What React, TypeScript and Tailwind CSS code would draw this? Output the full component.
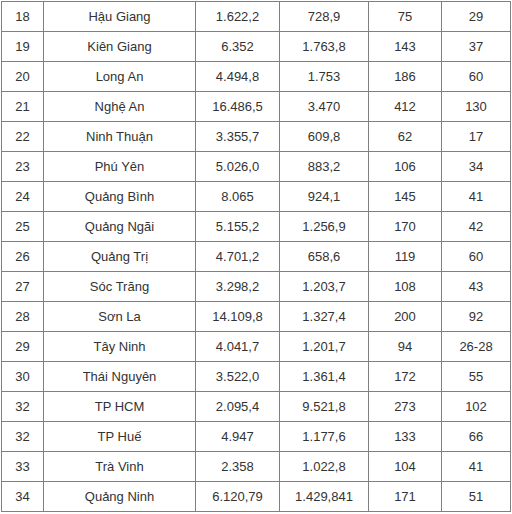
import React from 'react';

// [stt, province, area, population, communes before, communes after]
const rows: string[][] = [
  ['18', 'Hậu Giang', '1.622,2', '728,9', '75', '29'],
  ['19', 'Kiên Giang', '6.352', '1.763,8', '143', '37'],
  ['20', 'Long An', '4.494,8', '1.753', '186', '60'],
  ['21', 'Nghệ An', '16.486,5', '3.470', '412', '130'],
  ['22', 'Ninh Thuận', '3.355,7', '609,8', '62', '17'],
  ['23', 'Phú Yên', '5.026,0', '883,2', '106', '34'],
  ['24', 'Quảng Bình', '8.065', '924,1', '145', '41'],
  ['25', 'Quảng Ngãi', '5.155,2', '1.256,9', '170', '42'],
  ['26', 'Quảng Trị', '4.701,2', '658,6', '119', '60'],
  ['27', 'Sóc Trăng', '3.298,2', '1.203,7', '108', '43'],
  ['28', 'Sơn La', '14.109,8', '1.327,4', '200', '92'],
  ['29', 'Tây Ninh', '4.041,7', '1.201,7', '94', '26-28'],
  ['30', 'Thái Nguyên', '3.522,0', '1.361,4', '172', '55'],
  ['32', 'TP HCM', '2.095,4', '9.521,8', '273', '102'],
  ['32', 'TP Huế', '4.947', '1.177,6', '133', '66'],
  ['33', 'Trà Vinh', '2.358', '1.022,8', '104', '41'],
  ['34', 'Quảng Ninh', '6.120,79', '1.429,841', '171', '51'],
];

const colWidths = ['w-[42px]', 'w-[152px]', 'w-[84px]', 'w-[89px]', 'w-[73px]', 'w-[69px]'];

export default function App() {
  return (
    <div className="bg-white w-[512px] h-[514px] pt-px pl-px">
      <table
        className="table-fixed border-collapse w-[510px] text-[13px] text-[#333333]"
        style={{ fontFamily: '"Liberation Sans", Arial, sans-serif' }}
      >
        <colgroup>
          {colWidths.map((w, i) => (
            <col key={i} className={w} />
          ))}
        </colgroup>
        <tbody>
          {rows.map((row, i) => (
            <tr key={i} className="h-[30px]">
              {row.map((cell, j) => (
                <td key={j} className="border border-[#808080] text-center align-middle p-0 leading-none">
                  {cell}
                </td>
              ))}
            </tr>
          ))}
        </tbody>
      </table>
    </div>
  );
}
